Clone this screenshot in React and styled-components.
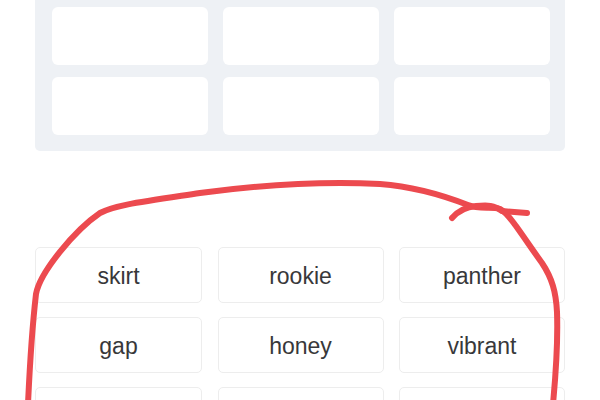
import React from "react";
import styled, { createGlobalStyle } from "styled-components";

const Global = createGlobalStyle`
  html, body { margin: 0; padding: 0; background: #ffffff; }
  body { width: 600px; height: 400px; overflow: hidden; font-family: "Liberation Sans", Arial, sans-serif; }
`;

const Page = styled.div`
  position: relative;
  width: 600px;
  height: 400px;
  padding: 0 35px;
  box-sizing: border-box;
  overflow: hidden;
`;

const Panel = styled.div`
  background: #eef1f5;
  border-radius: 0 0 5px 5px;
  padding: 7px 16px 16px 17px;
  display: grid;
  grid-template-columns: repeat(3, 156px);
  column-gap: 15px;
  row-gap: 12px;
`;

const Slot = styled.div`
  height: 58px;
  background: #ffffff;
  border-radius: 6px;
`;

const Words = styled.div`
  margin-top: 96px;
  display: grid;
  grid-template-columns: 167px 166px 166px;
  column-gap: 15.5px;
  row-gap: 14px;
`;

const Word = styled.div`
  height: 56px;
  box-sizing: border-box;
  border: 1px solid #ededed;
  border-radius: 5px;
  background: #fff;
  display: flex;
  align-items: center;
  justify-content: center;
  font-size: 23px;
  color: #38383a;
  padding-top: 2px;
`;

const Scribble = styled.svg`
  position: absolute;
  left: 0;
  top: 0;
  pointer-events: none;
`;

const words = ["skirt", "rookie", "panther", "gap", "honey", "vibrant", "", "", ""];

export default function App() {
  return (
    <>
      <Global />
      <Page>
        <Panel>
          {Array.from({ length: 6 }).map((_, i) => (
            <Slot key={i} />
          ))}
        </Panel>
        <Words>
          {words.map((w, i) => (
            <Word key={i}>{w}</Word>
          ))}
        </Words>
        <Scribble width="600" height="400" viewBox="0 0 600 400">
          <g fill="none" stroke="#ec4a4f" strokeWidth="6" strokeLinecap="round" strokeLinejoin="round">
            <path d="M 28 404 C 30 360, 33 320, 36 294 C 40 272, 75 230, 100 213 C 115 205, 140 202, 200 193 C 260 185, 320 181, 380 184 C 420 187, 450 198, 468 205 C 480 210, 492 206, 500 209 C 506 212, 510 218, 516 226 C 526 240, 534 252, 542 263 C 552 278, 556 292, 557 312 C 558 340, 556 372, 553 404" />
            <path d="M 452 218 C 458 211, 466 207, 476 206 C 488 205, 494 205, 502 211 L 527 213" />
          </g>
        </Scribble>
      </Page>
    </>
  );
}
